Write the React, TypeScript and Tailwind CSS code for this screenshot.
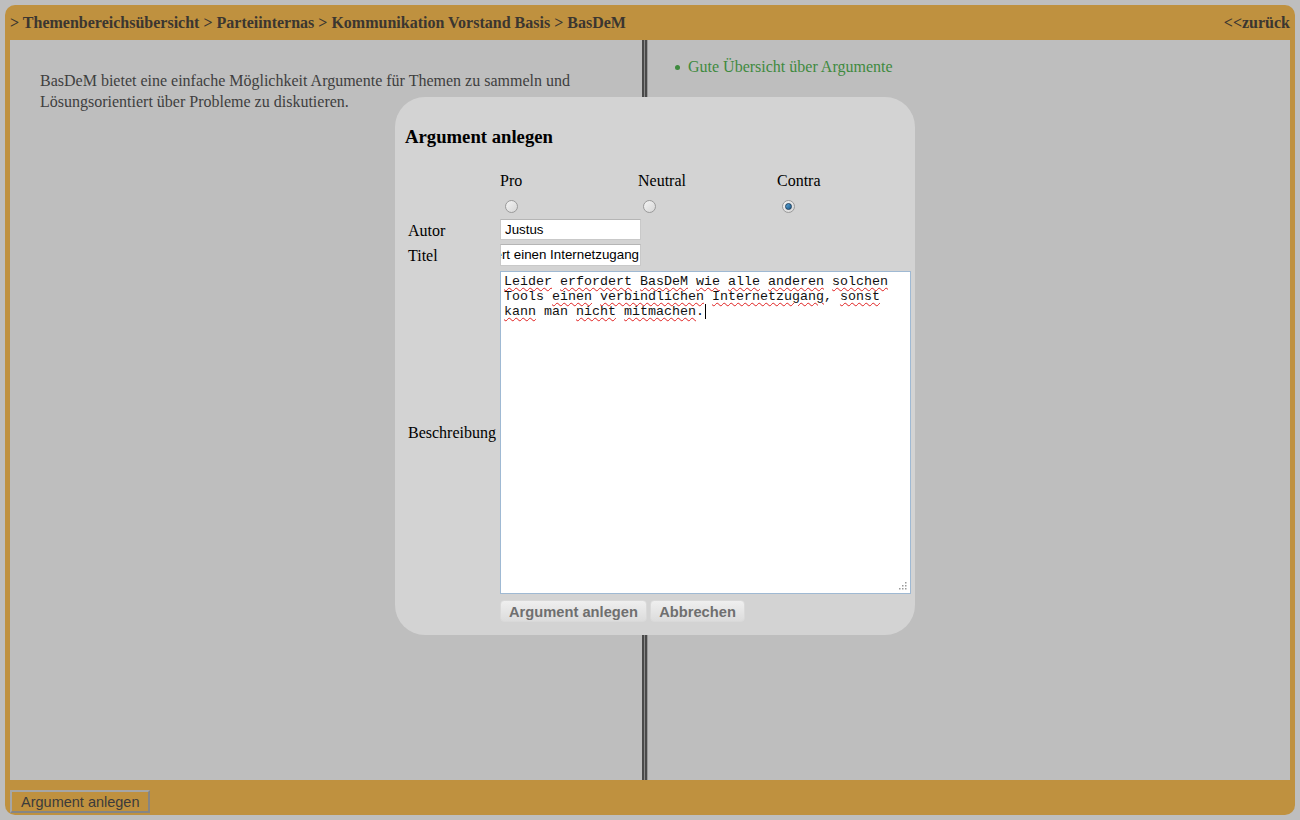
import React from "react";

const serif = { fontFamily: '"Liberation Serif", "Times New Roman", serif' };

function Radio({ checked }: { checked?: boolean }) {
  return (
    <span className="ml-[5px] inline-flex h-[13px] w-[13px] items-center justify-center rounded-full border border-[#9a9a9a] bg-gradient-to-br from-[#f4f4f4] to-[#d6d6d6]">
      {checked && (
        <span className="h-[7px] w-[7px] rounded-full border border-[#1d3f5e] bg-gradient-to-br from-[#5aa6d8] to-[#1e5a8a]" />
      )}
    </span>
  );
}

function W({ t, u = true }: { t: string; u?: boolean }) {
  return u ? (
    <span className="underline decoration-wavy decoration-[#e02020] decoration-1 underline-offset-[2px]">{t}</span>
  ) : (
    <span>{t}</span>
  );
}

export default function App() {
  return (
    <div className="relative h-[820px] w-[1300px] overflow-hidden bg-[#bebebe]" style={serif}>
      <div className="m-[5px] flex h-[810px] w-[1290px] flex-col rounded-[10px] bg-[#bf913f]">
        {/* header */}
        <div className="flex h-[35px] shrink-0 items-center justify-between px-[5px] text-[16px] font-bold text-[#3b3630]">
          <span>&gt; Themenbereichsübersicht &gt; Parteiinternas &gt; Kommunikation Vorstand Basis &gt; BasDeM</span>
          <span>&lt;&lt;zurück</span>
        </div>
        {/* content */}
        <div className="mx-[5px] flex h-[740px] bg-[#bebebe]">
          <div className="w-[632px] shrink-0 pl-[30px] pr-[30px] pt-[30px]">
            <p className="text-[16px] leading-[21px] text-[#3e3e3e]">
              BasDeM bietet eine einfache Möglichkeit Argumente für Themen zu sammeln und Lösungsorientiert über Probleme zu diskutieren.
            </p>
          </div>
          <div className="flex w-[6px] shrink-0">
            <div className="w-[2px] bg-[#4a4a4a]" />
            <div className="w-[1px] bg-[#8a8a8a]" />
            <div className="w-[2px] bg-[#4a4a4a]" />
            <div className="w-[1px] bg-[#9a9a9a]" />
          </div>
          <div className="flex-1 pt-[17px]">
            <ul className="pl-[27px] text-[16px] leading-[20px] text-[#3e8a3e]">
              <li className="flex items-center">
                <span className="mr-[8px] inline-block h-[5px] w-[5px] rounded-full bg-[#3e8a3e]" />
                Gute Übersicht über Argumente
              </li>
            </ul>
          </div>
        </div>
        {/* footer */}
        <div className="flex h-[35px] shrink-0 items-start px-[5px] pt-[10px]">
          <button
            className="h-[23px] w-[140px] border-2 border-t-[#a6a6a6] border-l-[#a6a6a6] border-b-[#858585] border-r-[#858585] bg-[#bf913f] pl-[9px] text-left text-[14.5px] leading-[18px] text-[#3b3b3b]"
            style={{ fontFamily: '"Liberation Sans", Arial, sans-serif' }}
          >
            Argument anlegen
          </button>
        </div>
      </div>

      {/* modal */}
      <div className="absolute left-[395px] top-[97px] h-[538px] w-[520px] rounded-[30px] bg-[#d3d3d3] pl-[10px] pt-[28px] text-black">
        <h2 className="h-[24px] text-[18.7px] font-bold leading-[24px]">Argument anlegen</h2>
        <div className="mt-[21px] flex h-[22px] items-center text-[16px]">
          <div className="w-[95px]" />
          <div className="w-[138px]">Pro</div>
          <div className="w-[139px]">Neutral</div>
          <div>Contra</div>
        </div>
        <div className="flex h-[25px] items-start pt-[8px]">
          <div className="w-[95px]" />
          <div className="flex w-[138px]"><Radio /></div>
          <div className="flex w-[139px]"><Radio /></div>
          <div className="flex"><Radio checked /></div>
        </div>
        <div className="flex h-[25px] items-start pt-[2px] text-[16px]">
          <div className="flex h-[23px] w-[95px] items-center pl-[3px]">Autor</div>
          <div
            className="flex h-[21px] w-[141px] items-center border border-[#c9c9c9] border-t-[#b5b5b5] bg-white pl-[4px] text-[13.33px] text-black"
            style={{ fontFamily: '"Liberation Sans", Arial, sans-serif' }}
          >
            Justus
          </div>
        </div>
        <div className="flex h-[26px] items-start pt-[2px] text-[16px]">
          <div className="flex h-[23px] w-[95px] items-center pl-[3px]">Titel</div>
          <div
            className="flex h-[22px] w-[141px] items-center justify-end overflow-hidden whitespace-nowrap border border-[#c9c9c9] border-t-[#b5b5b5] bg-white pr-[1px] text-[13.33px] text-black"
            style={{ fontFamily: '"Liberation Sans", Arial, sans-serif' }}
          >
            <span className="shrink-0">BasDeM erfordert einen Internetzugang</span>
          </div>
        </div>
        <div className="mt-[3px] flex items-center text-[16px]">
          <div className="w-[95px] pl-[3px]">Beschreibung</div>
          <div className="relative h-[323px] w-[411px] border border-[#9fb9d3] bg-white px-[3px] pt-[2px]">
            <div
              className="text-[13.33px] leading-[15px] text-[#111]"
              style={{ fontFamily: '"Liberation Mono", "Courier New", monospace' }}
            >
              <W t="Leider" /> <W t="erfordert" /> <W t="BasDeM" /> <W t="wie" /> <W t="alle" /> <W t="anderen" /> <W t="solchen" />
              <br />
              <W t="Tools" u={false} /> <W t="einen" /> <W t="verbindlichen" /> <W t="Internetzugang" />, <W t="sonst" />
              <br />
              <W t="kann" /> <W t="man" u={false} /> <W t="nicht" /> <W t="mitmachen" />.
              <span className="ml-[1px] border-l border-black" />
            </div>
            <svg className="absolute bottom-[2px] right-[2px]" width="10" height="10" viewBox="0 0 10 10">
              <rect x="7" y="1" width="1.5" height="1.5" fill="#9a9a9a" />
              <rect x="4" y="4" width="1.5" height="1.5" fill="#9a9a9a" />
              <rect x="7" y="4" width="1.5" height="1.5" fill="#9a9a9a" />
              <rect x="1" y="7" width="1.5" height="1.5" fill="#9a9a9a" />
              <rect x="4" y="7" width="1.5" height="1.5" fill="#9a9a9a" />
              <rect x="7" y="7" width="1.5" height="1.5" fill="#9a9a9a" />
            </svg>
          </div>
        </div>
        <div
          className="ml-[95px] mt-[6px] flex gap-[3px] text-[14.7px] font-bold text-[#6f6f6f]"
          style={{ fontFamily: '"Liberation Sans", Arial, sans-serif', textShadow: "0 1px 0 #fff" }}
        >
          <button className="h-[22px] w-[147px] rounded-[4px] border border-[#d9d9d9] bg-gradient-to-b from-[#efefef] to-[#dcdcdc]">
            Argument anlegen
          </button>
          <button className="h-[22px] w-[95px] rounded-[4px] border border-[#d9d9d9] bg-gradient-to-b from-[#efefef] to-[#dcdcdc]">
            Abbrechen
          </button>
        </div>
      </div>
    </div>
  );
}
